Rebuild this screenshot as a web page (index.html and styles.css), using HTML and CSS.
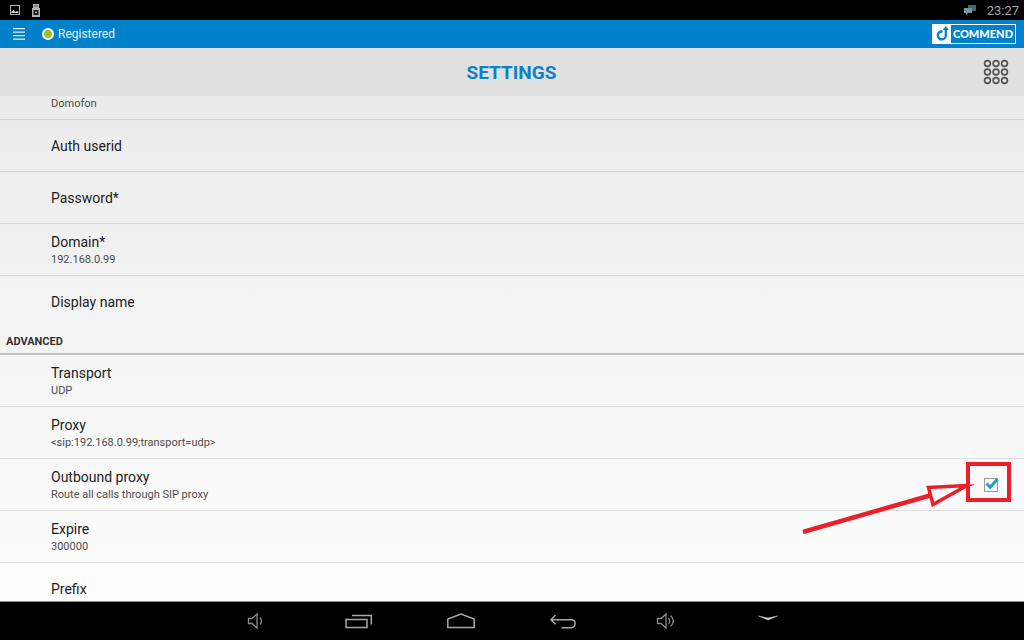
FILE: index.html
```html
<!DOCTYPE html>
<html lang="en">

<head>
    <meta charset="utf-8">
    <meta name="viewport" content="width=device-width, initial-scale=1">
    <title>Settings</title>
    <link rel="stylesheet" href="styles.css">
</head>

<body>

    <div class="status-bar">
        <svg class="status-icon" width="12" height="12" viewBox="0 0 12 12">
            <rect x="1.5" y="1.5" width="9" height="9" fill="none" stroke="#b5b5b5"/>
            <path d="M2.500 9V7.500l2-1.500 2 2 1.500-1 1.500 1V9z" fill="#d5d5d5"/>
        </svg>
        <svg class="status-icon" width="10" height="14" viewBox="0 0 10 14">
            <path d="M2 1h6v4h1v9H1V5h1z" fill="#b5b5b5"/>
            <path d="M4 2v2M6 2v2" stroke="#555"/>
            <circle cx="5" cy="9.500" r="1.800" fill="none" stroke="#111" stroke-width="1.600"/>
            <path d="M2.500 7l1 1M7.500 7l-1 1M2.500 12l1-1M7.500 12l-1-1" stroke="#111"/>
        </svg>
        <svg class="status-chat" width="14" height="12" viewBox="0 0 14 12">
            <path d="M5 1h8v6H5z" fill="#4d646e"/>
            <path d="M1 4h8v5H5l-2 2V9H1z" fill="#78919c"/>
        </svg>
        <span class="clock">23:27</span>
    </div>

    <div class="account-bar">
        <button class="icon-button" aria-label="Menu">
            <svg width="12" height="12" viewBox="0 0 12 12">
                <path d="M0 .7h12M0 4.200h12M0 7.700h12M0 11.200h12" stroke="#e4f3fb" stroke-width="1.300"/>
            </svg>
        </button>
        <span class="dot"></span>
        <span class="account-status">Registered</span>
        <div class="logo">
            <svg width="18" height="18" viewBox="0 0 18 18">
                <rect width="18" height="18" fill="#fff"/>
                <path d="M9.500 6.500H8a4 4 0 1 0 4.800 4V4" fill="none" stroke="#0782c8" stroke-width="2.300"/>
                <path d="M9.800 5l3-4 3 4z" fill="#0782c8"/>
            </svg>
            <span class="logo-name">COMMEND</span>
        </div>
    </div>

    <header class="title-bar">
        <h1 class="title">SETTINGS</h1>
        <button class="icon-button" aria-label="Keypad">
            <svg width="26" height="26" viewBox="0 0 26 26" fill="none" stroke="#505050" stroke-width="1.600">
                <circle cx="4.500" cy="4.500" r="2.900"/>
                <circle cx="13" cy="4.500" r="2.900"/>
                <circle cx="21.500" cy="4.500" r="2.900"/>
                <circle cx="4.500" cy="13" r="2.900"/>
                <circle cx="13" cy="13" r="2.900"/>
                <circle cx="21.500" cy="13" r="2.900"/>
                <circle cx="4.500" cy="21.500" r="2.900"/>
                <circle cx="13" cy="21.500" r="2.900"/>
                <circle cx="21.500" cy="21.500" r="2.900"/>
            </svg>
        </button>
    </header>

    <main class="settings">
        <div class="row row-cut">
            <span class="summary">Domofon</span>
        </div>
        <div class="row">
            <span class="name">Auth userid</span>
        </div>
        <div class="row">
            <span class="name">Password*</span>
        </div>
        <div class="row">
            <span class="name">Domain*</span>
            <span class="summary">192.168.0.99</span>
        </div>
        <div class="row row-last">
            <span class="name">Display name</span>
        </div>

        <h2 class="section">ADVANCED</h2>

        <div class="row">
            <span class="name">Transport</span>
            <span class="summary">UDP</span>
        </div>
        <div class="row">
            <span class="name">Proxy</span>
            <span class="summary">&lt;sip:192.168.0.99;transport=udp&gt;</span>
        </div>
        <div class="row row-check">
            <label class="row-text" for="outbound">
                <span class="name">Outbound proxy</span>
                <span class="summary">Route all calls through SIP proxy</span>
            </label>
            <span class="check">
                <input type="checkbox" id="outbound" checked>
                <svg class="tick" width="16" height="14" viewBox="0 0 16 14">
                    <path d="M2.500 5.500l3.700 3.700L13.500 1" fill="none" stroke="#2b9cc9" stroke-width="3"/>
                </svg>
            </span>
            <!-- red pointer over the checkbox -->
            <svg class="pointer" width="210" height="74" viewBox="0 0 210 74" fill="none" stroke="#e9202a">
                <rect x="166" y="4" width="41" height="36" stroke-width="4"/>
                <path d="M1 72L128 35.500" stroke-width="4.500"/>
                <path d="M126.500 27.500L165 25.500L131 44.500z" stroke-width="3.500"/>
                <path d="M158 24L173 24.500L158 30z" fill="#e9202a" stroke="none"/>
            </svg>
        </div>
        <div class="row">
            <span class="name">Expire</span>
            <span class="summary">300000</span>
        </div>
        <div class="row row-last">
            <span class="name">Prefix</span>
        </div>
    </main>

    <nav class="nav-bar">
        <button class="icon-button" aria-label="Volume down">
            <svg width="28" height="20" viewBox="0 0 28 20" fill="none" stroke="#8a8a8a" stroke-width="1.300">
                <path d="M5.500 7.500H9l5-4.500v14l-5-4.500H5.500zM17 6.500q3 3.500 0 7"/>
            </svg>
        </button>
        <button class="icon-button" aria-label="Recent apps">
            <svg width="28" height="20" viewBox="0 0 28 20" fill="none" stroke="#a8a8a8" stroke-width="1.500">
                <path d="M1 8.500h21v8H1zM7 4.500h19.300v9"/>
            </svg>
        </button>
        <button class="icon-button" aria-label="Home">
            <svg width="28" height="20" viewBox="0 0 28 20" fill="none" stroke="#a8a8a8" stroke-width="1.500">
                <path d="M.8 16.500V8L14 3l13.200 5v8.500z"/>
            </svg>
        </button>
        <button class="icon-button" aria-label="Back">
            <svg width="28" height="20" viewBox="0 0 28 20" fill="none" stroke="#a8a8a8" stroke-width="1.500">
                <path d="M6.500 4L2 8.700l4.500 4.600M2 8.700h20c5.500 0 5.500 8 0 8h-9.500"/>
            </svg>
        </button>
        <button class="icon-button" aria-label="Volume up">
            <svg width="28" height="20" viewBox="0 0 28 20" fill="none" stroke="#8a8a8a" stroke-width="1.300">
                <path d="M6.500 7.500h3.500l5-4.500v14l-5-4.500H6.500zM17.500 7q2.500 3 0 6M19.500 4.500q5.500 5.500 0 11"/>
            </svg>
        </button>
        <button class="icon-button" aria-label="Hide bar">
            <svg width="28" height="20" viewBox="0 0 28 20">
                <path d="M5.500 5l9.500 2 9.500-2-9.500 4z" fill="#d0d0d0" stroke="#d0d0d0" stroke-width=".5"/>
            </svg>
        </button>
    </nav>

</body>

</html>
```

FILE: styles.css
```css
* {
    box-sizing: border-box;
}

body {
    display: flex;
    flex-direction: column;
    height: 100vh;
    margin: 0;
    background: linear-gradient(#e8e8e8, #ffffff);
    color: #1c1c1c;
    font-family: Roboto, "Liberation Sans", sans-serif;
}

.icon-button {
    display: flex;
    padding: 0;
    border: none;
    background: none;
    cursor: pointer;
}

.status-bar {
    display: flex;
    flex: none;
    align-items: center;
    gap: 10px;
    height: 20px;
    padding: 0 5px 0 9px;
    background-color: #000000;
}

.status-chat {
    margin-left: auto;
}

.clock {
    color: #a6a6a6;
    font-size: 13px;
}

.account-bar {
    display: flex;
    flex: none;
    align-items: center;
    height: 28px;
    padding: 0 8px 0 13px;
    background-color: #0081c9;
    color: #e4f3fb;
}

.dot {
    width: 12px;
    height: 12px;
    margin: 0 4px 0 17px;
    border: 2px solid #ffffff;
    border-radius: 50%;
    background-color: #95c11f;
}

.account-status {
    font-size: 12px;
}

.logo {
    display: flex;
    align-items: center;
    height: 20px;
    margin-left: auto;
    border: 1px solid #ffffff;
}

.logo-name {
    padding: 0 2px;
    color: #ffffff;
    font-family: Lato, sans-serif;
    font-size: 11px;
    font-weight: 900;
    line-height: 16px;
}

.title-bar {
    display: grid;
    grid-template-columns: 1fr auto 1fr;
    flex: none;
    align-items: center;
    height: 48px;
    padding: 0 15px 0 14px;
    background-color: #e0e0e0;
}

.title {
    grid-column: 2;
    margin: 0;
    color: #0f80c8;
    font-size: 19px;
    font-weight: 700;
}

.title-bar .icon-button {
    justify-self: end;
}

.settings {
    flex: 1;
    min-height: 0;
    overflow: hidden;
}

.row {
    display: flex;
    flex-direction: column;
    justify-content: center;
    height: 52px;
    padding: 0 26px 0 51px;
    border-bottom: 1px solid rgba(0, 0, 0, 0.1);
}

.row-cut {
    justify-content: flex-start;
    height: 24px;
}

.row-last {
    border-bottom: none;
}

.row-check {
    position: relative;
    flex-direction: row;
    align-items: center;
    justify-content: space-between;
}

.row-text {
    display: flex;
    flex-direction: column;
}

.name {
    font-size: 14px;
    line-height: 20px;
}

.summary {
    color: #4c4c4c;
    font-size: 11px;
    line-height: 16px;
}

.section {
    height: 27px;
    margin: 0;
    padding-left: 6px;
    border-bottom: 2px solid #c2c2c2;
    color: #333333;
    font-size: 11px;
    font-weight: 700;
    line-height: 28px;
}

.check {
    position: relative;
    display: flex;
}

.check input {
    width: 14px;
    height: 14px;
    margin: 0;
    border: 1px solid #999999;
    background-color: #f7fbfd;
    appearance: none;
}

.tick {
    position: absolute;
    top: 0;
    left: 0;
    pointer-events: none;
}

.check input:not(:checked) + .tick {
    display: none;
}

.pointer {
    position: absolute;
    top: 1px;
    right: 12px;
    pointer-events: none;
}

.nav-bar {
    display: flex;
    flex: none;
    align-items: center;
    justify-content: center;
    gap: 74px;
    height: 39px;
    border-top: 1px solid #8a8a8a;
    background-color: #000000;
}
```
